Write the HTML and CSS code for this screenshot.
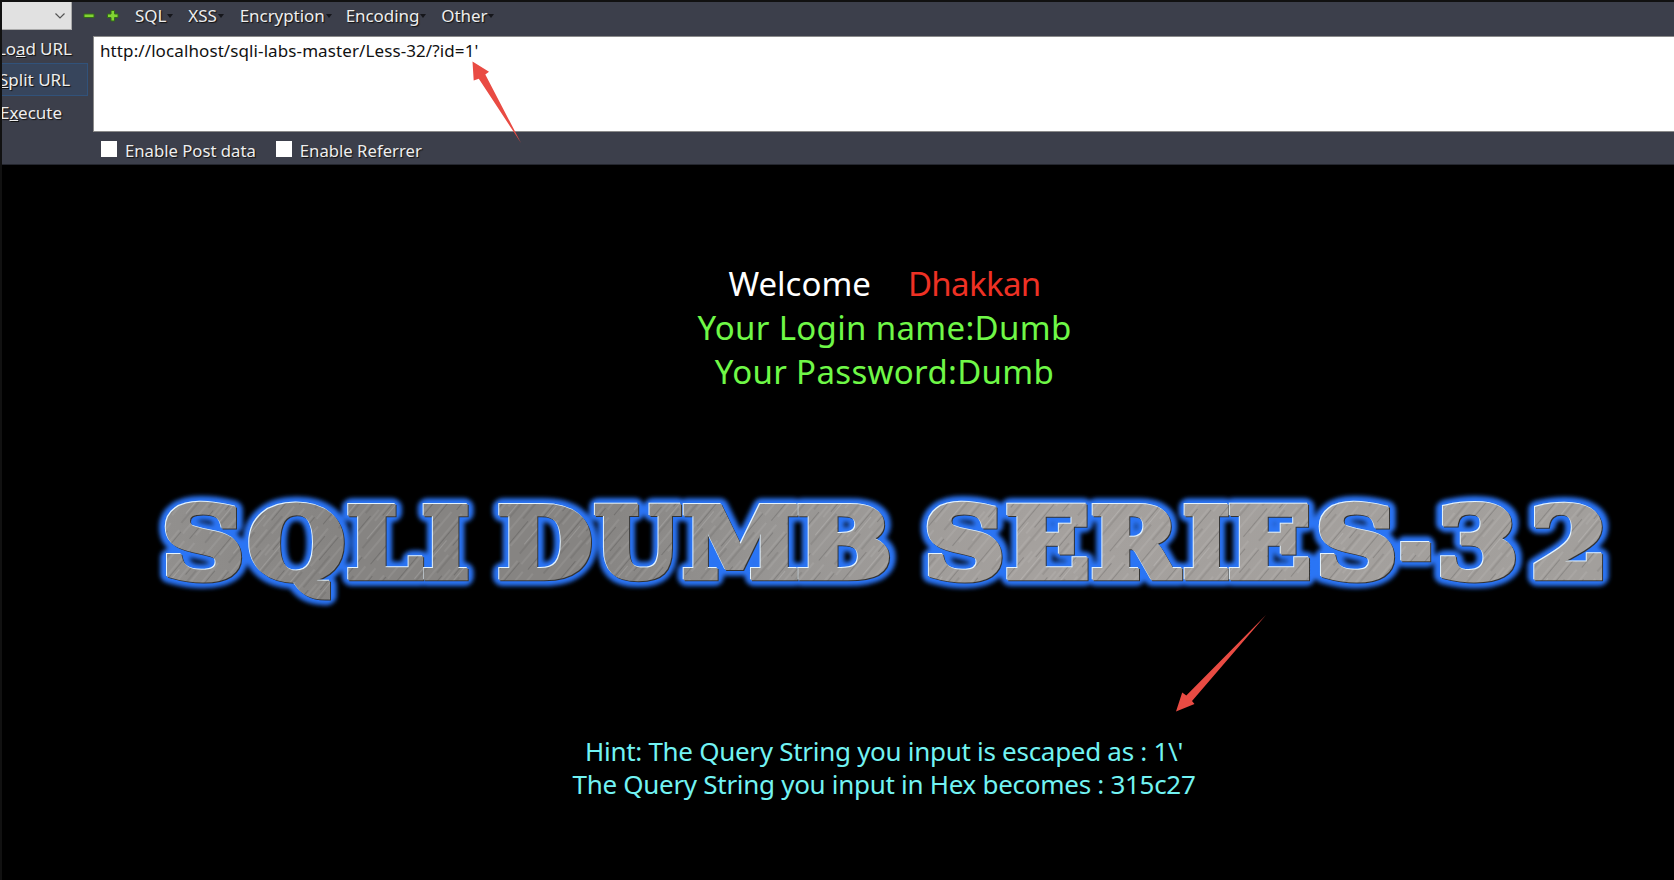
FILE: index.html
```html
<!DOCTYPE html>
<html lang="en">
<head>
<meta charset="utf-8">
<title>Less-32</title>
<link rel="stylesheet" href="styles.css">
</head>
<body>
<header class="hackbar">
  <div class="menus">
    <div class="select"><svg width="12" height="8" viewBox="0 0 12 8"><path d="M1.500 1.500 6 6l4.500-4.500" fill="none" stroke="#555" stroke-width="1.200"/></svg></div>
    <svg class="signs" width="38" height="14" viewBox="0 0 38 14"><path d="M2 5h10v3.500h-10zM25.500 5h3.500v-3.500h3.500v3.500h3.500v3.500h-3.500v3.500h-3.500v-3.500h-3.500z" fill="#82d333" stroke="#336d16"/></svg>
    <div class="menu-list">
      <span class="menu">SQL</span>
      <span class="menu">XSS</span>
      <span class="menu encryption">Encryption</span>
      <span class="menu">Encoding</span>
      <span class="menu">Other</span>
    </div>
  </div>
  <div class="main">
    <nav class="actions">
      <div class="action load">Lo<u>a</u>d URL</div>
      <div class="action split"><u>S</u>plit URL</div>
      <div class="action execute">E<u>x</u>ecute</div>
    </nav>
    <div class="url">http://localhost/sqli-labs-master/Less-32/?id=1'</div>
  </div>
  <div class="options">
    <label class="option"><i class="box"></i><span>Enable Post data</span></label>
    <label class="option"><i class="box"></i><span>Enable Referrer</span></label>
  </div>
</header>
<main class="page">
  <div class="welcome">
    <div><span class="white">Welcome</span><span class="red">Dhakkan</span></div>
    <div class="account">Your Login name:Dumb</div>
    <div class="account">Your Password:Dumb</div>
  </div>
  <svg class="banner" width="1480" height="150" viewBox="144 470 1480 150">
    <defs>
      <linearGradient id="light" gradientUnits="userSpaceOnUse" x1="165" y1="500" x2="1600" y2="580">
        <stop offset="0" stop-color="#92908e"/><stop offset=".12" stop-color="#868482"/><stop offset=".3" stop-color="#868482"/><stop offset=".42" stop-color="#979593"/><stop offset=".6" stop-color="#a5a19e"/><stop offset="1" stop-color="#a29f9c"/>
      </linearGradient>
      <pattern id="brush" width="31" height="97" patternUnits="userSpaceOnUse" patternTransform="rotate(40)">
        <path d="M2 0v61M7.500 30v50M13 0v40M18 40v57M24 5v35M29 50v40" stroke="#fff" stroke-opacity=".15"/>
        <path d="M4.500 8v44M10 50v40M15.500 0v30M21 20v41M26.500 60v37" stroke="#000" stroke-opacity=".15"/>
      </pattern>
      <filter id="glow" filterUnits="userSpaceOnUse" x="144" y="470" width="1480" height="150"><feGaussianBlur stdDeviation="2.200"/></filter>
      <g id="title"></g>
      <mask id="letters" maskUnits="userSpaceOnUse" x="144" y="470" width="1480" height="150"><use href="#title" class="cutout"/></mask>
    </defs>
    <g filter="url(#glow)"><use href="#title" class="glow"/></g>
    <use href="#title" class="shade" x="1" y="1"/>
    <use href="#title" class="shine" x="-1" y="-1"/>
    <g mask="url(#letters)">
      <rect x="144" y="470" width="1480" height="150" fill="url(#light)"/>
      <rect x="144" y="470" width="1480" height="150" fill="url(#brush)"/>
    </g>
  </svg>
  <div class="hint">
    <div>Hint: The Query String you input is escaped as : 1\'</div>
    <div>The Query String you input in Hex becomes : 315c27</div>
  </div>
</main>
<svg class="arrows" width="1674" height="880" viewBox="0 0 1674 880">
  <path d="M472.500 61.500 489 71.700 485.300 74.500 521 143 478.800 78.700 473.700 80.500zM1176 711.500 1182.200 692.500 1186.300 695.500 1266 615 1192 701 1194.500 704z"/>
</svg>
<script src="banner.js"></script>
</body>
</html>
```
FILE: styles.css
```css
body { margin: 0; width: 1674px; height: 880px; overflow: hidden; background: #000; font-family: "Noto Sans", "Open Sans", sans-serif; box-sizing: border-box; border-top: 2px solid #111; border-left: 2px solid #111; }
.hackbar { height: 163px; background: #3c3f4b; color: #eee; font-size: 17px; text-shadow: 1px 1px 1px #111; border-bottom: 1px solid #24262e; box-sizing: border-box; white-space: nowrap; }
.menus { display: flex; height: 34px; align-items: flex-start; line-height: 27px; }
.select { box-sizing: border-box; width: 70px; height: 28px; background: #e1e1e1; border: solid #aaa; border-width: 0 1px 1px 0; display: flex; align-items: center; justify-content: flex-end; padding-right: 5px; }
.signs { margin: 7px 15px 0 10px; }
.menu-list { display: flex; gap: 22px; letter-spacing: -0.07px; }
.encryption { margin: 0 -1px 0 1px; }
.menu { position: relative; }
.menu::after { content: ""; position: absolute; right: -7px; top: 12px; border: 3px solid transparent; border-top: 4px solid #15161b; border-bottom: 0; }
.main { display: flex; height: 96px; }
.actions { width: 91px; overflow: hidden; }
.action { box-sizing: border-box; width: 86px; }
.load { height: 27px; line-height: 25px; text-indent: -5px; letter-spacing: -0.1px; }
.split { height: 33px; line-height: 32px; background: #37455c; border: 1px solid #31527a; border-left: 0; text-indent: -3px; }
.execute { height: 32px; line-height: 33px; text-indent: -2px; }
.url { flex: 1; background: #fff; color: #111; border: solid #8a8a8a; border-width: 1px 0 1px 1px; padding-left: 6px; text-shadow: none; line-height: 27px; letter-spacing: 0.1px; }
.options { display: flex; gap: 20px; height: 34px; padding-left: 99px; font-size: 16.7px; }
.option { display: flex; align-items: center; }
.option span { padding-top: 2px; }
.box { width: 16px; height: 16px; background: #fff; margin-right: 8px; }
.page { display: flex; flex-direction: column; align-items: center; padding-left: 92px; }
.welcome { margin-top: 97px; font-size: 33px; line-height: 44px; text-align: center; color: #6ff847; }
.white { color: #fff; margin-right: 37px; margin-left: 1px; }
.red { color: #ee3124; letter-spacing: -0.65px; }
.account { letter-spacing: 0.33px; padding-left: 1px; }
.banner { margin-top: 76px; font-family: "DejaVu Serif", serif; font-weight: bold; }
.glow { fill: #2b74f5; stroke: #2b74f5; stroke-width: 19px; stroke-linejoin: round; }
.shade { fill: #333; stroke: #333; stroke-width: 7px; }
.shine { fill: #e4f4ff; stroke: #e4f4ff; stroke-width: 7px; }
.cutout { fill: #fff; stroke: #fff; stroke-width: 7px; }
.hint { font-size: 26px; line-height: 33px; color: #72f3f3; text-align: center; margin-top: 115px; letter-spacing: -0.29px; }
.arrows { position: absolute; left: 0; top: 0; fill: #e94b43; }
```
FILE: banner.js
```js
// Each glyph of the banner: character, left and right ink edge.
const glyphs = [["S",165,242],["Q",249,344],["L",347.5,424],["I",423,468.5],["D",498.5,591.5],["U",594.5,682],["M",683.5,797.5],["B",797.5,889],["S",927,1002.5],["E",1006.5,1088.5],["R",1092,1182.5],["I",1184,1229],["E",1229,1310],["S",1319,1395],["-",1401,1431],["3",1440,1516],["2",1533.5,1602.5]];
const outline = 7;
const ctx = document.createElement("canvas").getContext("2d");
ctx.font = 'bold 100px "DejaVu Serif"';
const title = document.getElementById("title");
for (const [ch, left, right] of glyphs) {
  const m = ctx.measureText(ch);
  const l = -m.actualBoundingBoxLeft, r = m.actualBoundingBoxRight;
  const sx = (right - left) / (r - l + outline);
  // Round letters overshoot the cap line and the baseline.
  const round = "SQ3".includes(ch);
  const t = document.createElementNS("http://www.w3.org/2000/svg", "text");
  t.textContent = ch;
  t.setAttribute("font-size", 100);
  t.setAttribute("transform", `translate(${left - (l - outline / 2) * sx} ${round ? 577.5 : 576.6}) scale(${sx} ${round ? 0.98 : 0.95})`);
  title.appendChild(t);
}
```
